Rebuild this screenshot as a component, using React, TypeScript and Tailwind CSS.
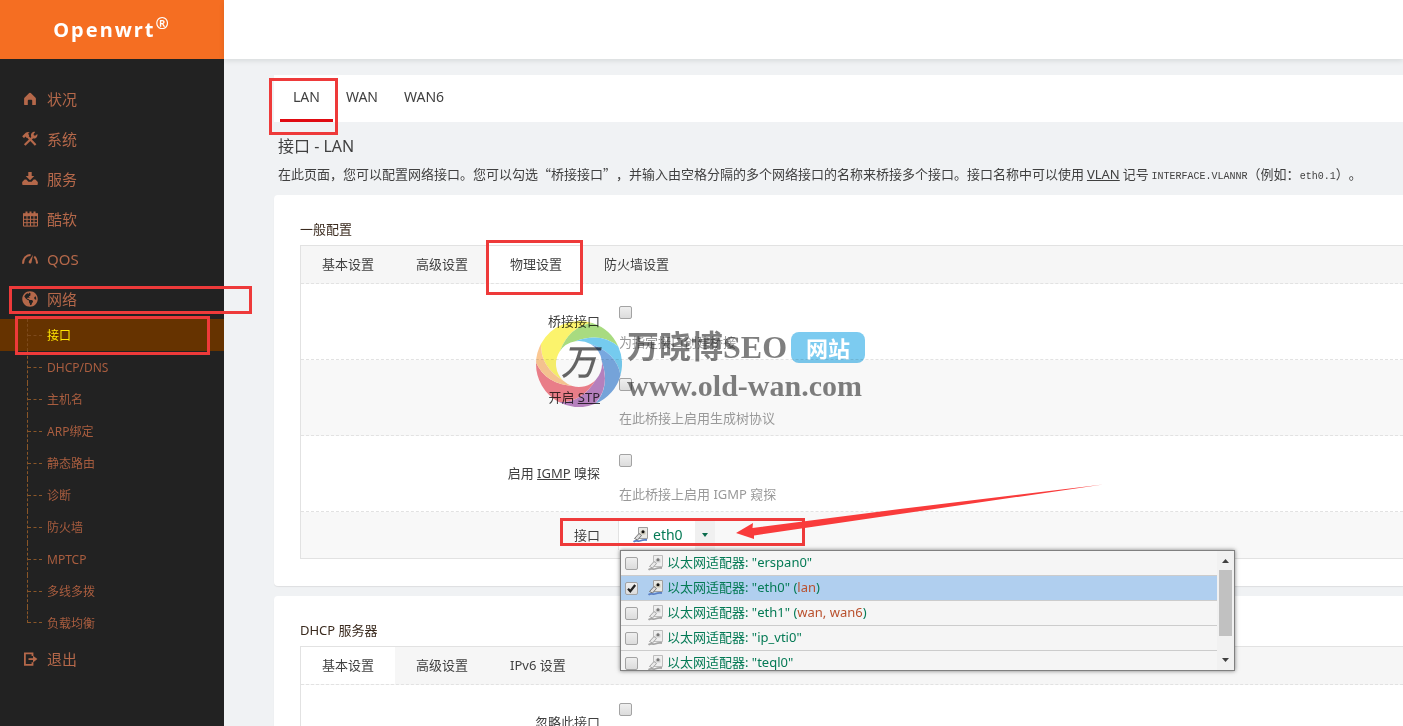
import type { ReactNode } from 'react';
import { clsx } from 'clsx';
import { FaGlobeAmericas } from 'react-icons/fa';

const subItems = [
  'DHCP/DNS',
  '主机名',
  'ARP绑定',
  '静态路由',
  '诊断',
  '防火墙',
  'MPTCP',
  '多线多拨',
  '负载均衡',
];

const adapters = [
  { name: 'erspan0', nets: [] },
  { name: 'eth0', nets: ['lan'], checked: true },
  { name: 'eth1', nets: ['wan', 'wan6'] },
  { name: 'ip_vti0', nets: [] },
  { name: 'teql0', nets: [] },
];

function HomeIcon() {
  return (
    <svg viewBox="0 0 16 16" className="size-4" fill="currentColor">
      <path d="M8 1.8c.5 0 .9.2 1.3.6l4 4c.4.4.6.8.6 1.4v5.4c0 .6-.4.9-.9.9h-2.8V9.6c0-.5-.3-.8-.8-.8H6.6c-.5 0-.8.3-.8.8v4.5H3c-.5 0-.9-.3-.9-.9V7.8c0-.6.2-1 .6-1.4l4-4c.4-.4.8-.6 1.300-.6z" />
    </svg>
  );
}

function ToolsIcon() {
  return (
    <svg viewBox="0 0 16 16" className="size-4" fill="none" stroke="currentColor">
      <path d="M5.500 5.500 13.600 14" strokeWidth="2.200" />
      <path d="M10.600 6.200 2.700 14" strokeWidth="2.200" />
      <path d="M.2 5.300 3.700 1.700c1-.9 2.600-1 4.200-.6-1.300.5-1.700 1.100-1.500 1.900l.8 1.800-2.300 2.100-1.700-1.500-1.100 1.800z" fill="currentColor" stroke="none" />
      <path d="M13.200.900 11.600 3l.2 1.300 1.300.4 2.200-1.600c.5 1.900-.3 3.500-1.800 4.100-1.300.5-2.900.2-3.800-.800-.9-1-1-2.600-.3-3.800.8-1.300 2.200-1.900 3.800-1.700z" fill="currentColor" stroke="none" />
    </svg>
  );
}

function TrayIcon() {
  return (
    <svg viewBox="0 0 16 16" className="size-4" fill="currentColor">
      <path d="M6.300 1h3.400v4h2.600L8 9.300 3.700 5h2.600z" />
      <path d="M2.600 8.400h1.800l2 2.300h3.200l2-2.300h1.800L15.800 11v2.200c0 .5-.3.8-.8.8H1c-.5 0-.8-.3-.8-.8V11z" />
    </svg>
  );
}

function CalendarIcon() {
  return (
    <svg viewBox="0 0 16 16" className="size-4" fill="none" stroke="currentColor">
      <path d="M1.500 4.500h14v10.600h-14zM5 5v10M8.500 5v10M12 5v10M1.500 8.300h14M1.500 11.700h14" strokeWidth="1" />
      <path d="M1 2.200h15v3H1z" fill="currentColor" stroke="none" />
      <path d="M4.500.6v2.800M8.500.6v2.800M12.500.6v2.800" strokeWidth="2" />
    </svg>
  );
}

function GaugeIcon() {
  return (
    <svg viewBox="0 0 16 16" className="size-4" fill="none" stroke="currentColor" strokeWidth="2">
      <path d="M1 12.700C1 7.500 4 4.100 8.600 4.100" />
      <path d="M12.300 5.600c1.700 1.500 2.700 4 2.800 7" />
      <path d="M11 3.700 9.600 11c-.2 1.200-1 1.700-1.900 1.500-1-.3-1.300-1.200-.8-2.200z" fill="currentColor" stroke="none" />
    </svg>
  );
}

function LogoutIcon() {
  return (
    <svg viewBox="0 0 16 16" className="size-4" fill="none" stroke="currentColor" strokeWidth="1.800">
      <path d="M10.500 5V2.400H2.900v11.400h7.600v-2.600" />
      <path d="M6.500 8.100h5" />
      <path d="M11 4.800 15.400 8.100 11 11.400z" fill="currentColor" stroke="none" />
    </svg>
  );
}

function AdapterIcon({ active }: { active?: boolean }) {
  return (
    <svg viewBox="0 0 16 16" className="size-4 shrink-0" fill="none">
      <path d="M5.500.5h9v11h-9z" fill={active ? '#e8e8e4' : '#efefef'} stroke={active ? '#a0a0a0' : '#bdbdbd'} />
      <path d="M7.500 4.500 10 2.500l2.500 2v3h-5z" fill={active ? '#c9c5b5' : '#d0d0d0'} />
      <circle cx="10" cy="4.700" r="1.500" fill={active ? '#111' : '#777'} />
      <path d="M1.500 11.500 6 6.500l2.500 2-4 4.500z" fill={active ? '#dcdcdc' : '#e9e9e9'} stroke={active ? '#777' : '#a5a5a5'} />
      <path d="M.5 14.800c3-2.500 4 .4 7-1 2-.9 4-1.300 6.500-.8" stroke={active ? '#5a7fc4' : '#a5a5a5'} strokeWidth="1.800" />
    </svg>
  );
}

function Tick({ id, checked }: { id: string; checked?: boolean }) {
  return (
    <span className="relative inline-flex size-[13px] shrink-0">
      <input
        type="checkbox"
        id={id}
        defaultChecked={checked}
        className="peer size-[13px] appearance-none rounded-xs border border-[#a3a3a3] bg-linear-to-b from-[#efefef] to-[#dcdcdc]"
      />
      <svg viewBox="0 0 13 13" className="pointer-events-none absolute inset-0 hidden peer-checked:block" fill="none" stroke="#222" strokeWidth="2.200">
        <path d="M3 6.800 5.300 9.300 10.200 3" />
      </svg>
    </span>
  );
}

function MenuLink({ icon, children }: { icon: ReactNode; children: ReactNode }) {
  return (
    <a href="#" className="flex h-10 items-center gap-[9px] pl-[22px] text-[15px] text-[#b5684a]">
      {icon}
      {children}
    </a>
  );
}

function Sidebar() {
  return (
    <aside className="flex w-56 shrink-0 flex-col bg-[#222]">
      <a href="#" className="flex h-[59px] items-center justify-center bg-[#f56e22] text-xl font-bold tracking-[2px] text-white">
        <span>
          Openwrt<sup className="text-base">®</sup>
        </span>
      </a>
      <nav className="pt-5">
        <MenuLink icon={<HomeIcon />}>状况</MenuLink>
        <MenuLink icon={<ToolsIcon />}>系统</MenuLink>
        <MenuLink icon={<TrayIcon />}>服务</MenuLink>
        <MenuLink icon={<CalendarIcon />}>酷软</MenuLink>
        <MenuLink icon={<GaugeIcon />}>QOS</MenuLink>
        <MenuLink icon={<FaGlobeAmericas className="size-4" />}>网络</MenuLink>
        <ul className="text-xs leading-[34px] text-[#a95d3f]">
          <li className="flex h-8 bg-[#663300]">
            <span className="ml-[27px] flex w-5 items-center border-l border-dashed border-[#7d4a1c]">
              <i className="w-[14px] border-t border-dashed border-[#7d4a1c]" />
            </span>
            <a href="#" className="text-[#ffe600]">接口</a>
          </li>
          {subItems.map((item, i) => (
            <li key={item} className="flex h-8">
              <span
                className={clsx(
                  'ml-[27px] flex w-5 border-l border-dashed border-[#8a5628]',
                  i === subItems.length - 1 ? 'h-4 items-end' : 'items-center',
                )}
              >
                <i className="w-[14px] border-t border-dashed border-[#8a5628]" />
              </span>
              <a href="#">{item}</a>
            </li>
          ))}
        </ul>
        <MenuLink icon={<LogoutIcon />}>退出</MenuLink>
      </nav>
    </aside>
  );
}

function Section({ title, tabs, active, children }: { title: string; tabs: string[]; active: number; children: ReactNode }) {
  return (
    <section className="rounded-l bg-white pt-[22px] pb-[27px] pl-[26px] shadow-[0_1px_1px_rgba(0,0,0,0.08)]">
      <h3 className="mb-1 h-6 leading-6 text-[#3a2a1e]">{title}</h3>
      <div className="border-y border-l border-[#e2e2e2]">
        <div className="flex border-b border-dashed border-[#e2e2e2] bg-[#f6f6f6]">
          {tabs.map((tab, i) => (
            <button key={tab} type="button" className={clsx('h-[37px] px-[21px]', i === active && 'bg-white')}>
              {tab}
            </button>
          ))}
        </div>
        {children}
      </div>
    </section>
  );
}

function CheckRow({ id, label, hint, shaded, tight }: { id: string; label: ReactNode; hint?: string; shaded?: boolean; tight?: boolean }) {
  return (
    <div className={clsx('flex h-[76px] border-b border-dashed border-[#e2e2e2]', shaded && 'bg-[#f8f8f8]')}>
      <label htmlFor={id} className="w-[299px] text-right leading-[75px]">{label}</label>
      <div className={clsx('ml-[19px] flex flex-col items-start', tight ? 'gap-[13px] pt-[22px]' : 'gap-[17px] pt-[18px]')}>
        <Tick id={id} />
        {hint && <p className="leading-5 text-[#999]">{hint}</p>}
      </div>
    </div>
  );
}

function AdapterSelect() {
  return (
    <div className="relative mt-2 ml-[18px]">
      <button type="button" aria-expanded="true" className="flex h-[30px] items-center border-l border-[#e2e2e2] bg-white text-sm text-[#047a55]">
        <span className="flex items-center gap-1 pr-3 pl-3.5">
          <AdapterIcon active />
          eth0
        </span>
        <span className="flex h-full w-5 items-center justify-center bg-[#f0f0f0]">
          <svg viewBox="0 0 6 4" className="h-1 w-1.5" fill="#0a6b4c">
            <path d="M0 0h6L3 4z" />
          </svg>
        </span>
      </button>
      <div className="absolute top-[30px] left-0.5 z-10 flex h-[121px] w-[615px] overflow-hidden border border-[#808080] bg-[#f5f5f5] shadow-[0_0_4px_rgba(0,0,0,0.5)]">
        <ul className="flex-1">
          {adapters.map(({ name, nets, checked }) => (
            <li key={name} className={clsx('flex h-[25px] items-center border-b border-[#ccc] pl-1 text-[#047a55]', checked && 'bg-[#b0cfef]')}>
              <Tick id={name} checked={checked} />
              <label htmlFor={name} className="flex items-center gap-[3px] pl-2.5">
                <AdapterIcon active={checked} />
                <span>
                  以太网适配器: "{name}"
                  {nets.length > 0 && (
                    <>
                      {' '}(<span className="text-[#b9502d]">{nets.join(', ')}</span>)
                    </>
                  )}
                </span>
              </label>
            </li>
          ))}
        </ul>
        <div className="flex w-[17px] flex-col items-center bg-[#f1f1f1] py-2">
          <svg viewBox="0 0 7 4" className="h-1 w-[7px]" fill="#404040">
            <path d="M0 4h7L3.500 0z" />
          </svg>
          <span className="mt-[7px] mb-auto h-[66px] w-[13px] bg-[#c1c1c1]" />
          <svg viewBox="0 0 7 4" className="h-1 w-[7px]" fill="#404040">
            <path d="M0 0h7L3.500 4z" />
          </svg>
        </div>
      </div>
    </div>
  );
}

// angles in degrees, clockwise from twelve o'clock
const petals = [
  { from: -62, to: 18, color: '#fbf25c' },
  { from: 18, to: 66, color: '#9fd873' },
  { from: 66, to: 105, color: '#67c6ee' },
  { from: 105, to: 158, color: '#6a9fdc' },
  { from: 158, to: 208, color: '#b377bd' },
  { from: 208, to: 272, color: '#ef7480' },
  { from: 272, to: 298, color: '#fbc288' },
];

function point(deg: number, r: number) {
  const a = (deg * Math.PI) / 180;
  return `${(43 + r * Math.sin(a)).toFixed(2)} ${(43 - r * Math.cos(a)).toFixed(2)}`;
}

function petalPath(from: number, to: number) {
  return [
    `M${point(from, 43)}`,
    `A43 43 0 0 1 ${point(to, 43)}`,
    `Q${point(to - 32, 39)} ${point(to - 75, 23)}`,
    `A23 23 0 0 0 ${point(from - 75, 23)}`,
    `Q${point(from - 32, 39)} ${point(from, 43)}Z`,
  ].join('');
}

function Watermark() {
  return (
    <div className="pointer-events-none absolute top-[321px] left-[536px] z-20 flex gap-[5px] mix-blend-multiply">
      <div className="relative size-[86px]">
        <svg viewBox="0 0 86 86" className="size-full opacity-90">
          <circle cx="43" cy="43" r="24" fill="#fff" />
          {petals.map((p) => (
            <path key={p.color} d={petalPath(p.from, p.to)} fill={p.color} />
          ))}
        </svg>
        <span className="absolute inset-0 text-center text-4xl leading-[82px] font-medium text-black/60 italic">万</span>
      </div>
      <div className="pt-[7px] font-['Liberation_Serif','Noto_Sans_CJK_SC',serif] font-bold text-black/50">
        <div className="flex h-[38px] items-center gap-1 text-[32px]">
          <span>万晓博SEO</span>
          <span className="h-[31px] rounded-lg bg-[#7ccbf0] px-[15px] font-['Noto_Sans_CJK_SC',sans-serif] text-[22px] leading-[31px] text-white">
            网站
          </span>
        </div>
        <p className="text-3xl leading-10">www.old-wan.com</p>
      </div>
    </div>
  );
}

// hand-drawn red marks laid over the page
function Annotations() {
  return (
    <div className="pointer-events-none absolute inset-0 z-30">
      <div className="absolute top-[78px] left-[269px] h-[57px] w-[69px] border-3 border-[#ee3a3a]" />
      <div className="absolute top-[240px] left-[486px] h-[55px] w-[97px] border-3 border-[#ee3a3a]" />
      <div className="absolute top-[286px] left-[9px] h-[28px] w-[243px] border-3 border-[#ee3a3a]" />
      <div className="absolute top-[316px] left-[15px] h-[39px] w-[195px] border-3 border-[#ee3a3a]" />
      <div className="absolute top-[518px] left-[560px] h-[28px] w-[245px] border-3 border-[#ee3a3a]" />
      <svg viewBox="0 0 368 56" className="absolute top-[484px] left-[736px] h-14 w-[368px]" fill="#f93b3b">
        <path d="M0 49 17 39 16.500 44 164 25 367 .5 164 30 18 51.500 18 55z" />
      </svg>
    </div>
  );
}

export default function App() {
  return (
    <div className="relative flex h-screen overflow-hidden bg-[#f0f2f4] font-['Noto_Sans','Noto_Sans_CJK_SC',sans-serif] text-[13px] text-[#404040]">
      <Sidebar />
      <div className="flex min-w-0 flex-1 flex-col">
        <header className="h-[59px] shrink-0 bg-white shadow-[0_2px_5px_rgba(0,30,20,0.1)]" />
        <main className="pt-4 pl-[50px]">
          <nav className="flex h-[47px] bg-white pl-1.5 text-sm leading-[44px]">
            <a href="#" className="border-b-3 border-[#e00b12] px-[13px]">LAN</a>
            <a href="#" className="px-[13px]">WAN</a>
            <a href="#" className="px-[13px]">WAN6</a>
          </nav>
          <h2 className="mt-3 pl-1 text-base leading-6">接口 - LAN</h2>
          <p className="mt-1.5 mb-2 pl-1 font-['Noto_Sans_CJK_SC',sans-serif] leading-5 whitespace-nowrap [text-spacing-trim:space-all]">
            在此页面，您可以配置网络接口。您可以勾选“桥接接口”，并输入由空格分隔的多个网络接口的名称来桥接多个接口。接口名称中可以使用{' '}
            <abbr className="font-['Noto_Sans',sans-serif] underline">VLAN</abbr> 记号{' '}
            <code className="font-['Liberation_Mono',monospace] text-[10px]">INTERFACE.VLANNR</code>（例如：
            <code className="font-['Liberation_Mono',monospace] text-[10px]">eth0.1</code>）。
          </p>
          <div className="flex flex-col gap-2.5">
            <Section title="一般配置" tabs={['基本设置', '高级设置', '物理设置', '防火墙设置']} active={2}>
              <CheckRow id="bridge" label="桥接接口" hint="为指定接口创建桥接" tight />
              <CheckRow id="stp" label={<>开启 <u>STP</u></>} hint="在此桥接上启用生成树协议" shaded />
              <CheckRow id="igmp" label={<>启用 <u>IGMP</u> 嗅探</>} hint="在此桥接上启用 IGMP 窥探" />
              <div className="flex h-[46px] bg-[#f8f8f8]">
                <span className="w-[299px] text-right leading-[46px]">接口</span>
                <AdapterSelect />
              </div>
            </Section>
            <Section title="DHCP 服务器" tabs={['基本设置', '高级设置', 'IPv6 设置']} active={0}>
              <CheckRow id="ignore" label="忽略此接口" />
            </Section>
          </div>
        </main>
      </div>
      <Watermark />
      <Annotations />
    </div>
  );
}
